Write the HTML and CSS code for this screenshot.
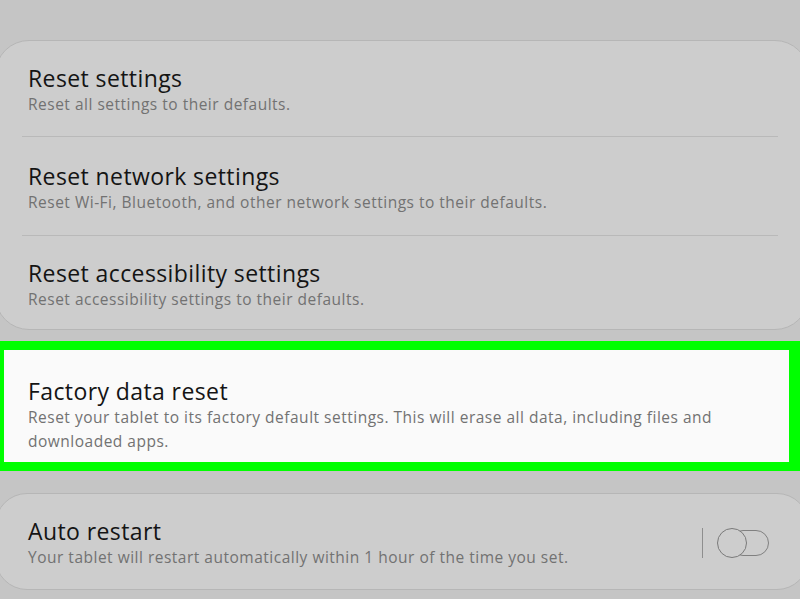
FILE: index.html
```html
<!DOCTYPE html>
<html lang="en">
<head>
    <meta charset="UTF-8">
    <title>Reset</title>
    <link rel="stylesheet" href="styles.css">
</head>
<body>
    <div class="screen">
        <!-- Reset options group -->
        <div class="card card-top">
            <div class="row">
                <div class="title">Reset settings</div>
                <div class="summary">Reset all settings to their defaults.</div>
            </div>
            <div class="divider"></div>
            <div class="row row-mid">
                <div class="title">Reset network settings</div>
                <div class="summary">Reset Wi-Fi, Bluetooth, and other network settings to their defaults.</div>
            </div>
            <div class="divider"></div>
            <div class="row row-last">
                <div class="title">Reset accessibility settings</div>
                <div class="summary">Reset accessibility settings to their defaults.</div>
            </div>
        </div>

        <!-- Highlighted option -->
        <div class="highlight">
            <div class="title">Factory data reset</div>
            <div class="summary">Reset your tablet to its factory default settings. This will erase all data, including files and downloaded apps.</div>
        </div>

        <div class="card card-bottom">
            <div class="row row-switch">
                <div class="row-text">
                    <div class="title">Auto restart</div>
                    <div class="summary">Your tablet will restart automatically within 1 hour of the time you set.</div>
                </div>
                <div class="switch-area">
                    <span class="switch-sep"></span>
                    <span class="switch">
                        <span class="switch-thumb"></span>
                    </span>
                </div>
            </div>
        </div>
    </div>
</body>
</html>
```

FILE: styles.css
```css
body {
    margin: 0;
    background-color: #c5c5c5;
    font-family: 'Open Sans', 'Noto Sans', sans-serif;
    overflow: hidden;
}

.screen {
    width: 800px;
    height: 599px;
    padding-top: 40px;
    box-sizing: border-box;
    overflow: hidden;
}

.card {
    background-color: #cdcdcd;
    border: 1px solid #b6b6b6;
    border-radius: 34px;
    margin-left: -5px;
    margin-right: -9px;
    padding-left: 32px;
}

.row {
    padding: 23px 0 20px;
}

.row-mid {
    padding-top: 25px;
    padding-bottom: 21px;
}

.row-last {
    padding-bottom: 18px;
}

.divider {
    height: 1px;
    background-color: #b9b9b9;
    margin-left: -6px;
    margin-right: 30px;
}

.title {
    font-size: 23px;
    line-height: 28px;
    letter-spacing: 0.4px;
    color: #141414;
}

.summary {
    font-size: 15.5px;
    line-height: 24px;
    letter-spacing: 0.5px;
    color: #727272;
}

/* Green highlight box */
.highlight {
    margin-top: 11px;
    background-color: #fafafa;
    border-style: solid;
    border-color: #00ff00;
    border-width: 9px 11px 9px 4px;
    padding: 27px 40px 9px 24px;
}

.card-bottom {
    margin-top: 22px;
    border-radius: 32px;
}

.row-switch {
    display: flex;
    align-items: center;
    padding: 23px 0 20px;
}

.row-text {
    flex: 1;
}

.switch-area {
    display: flex;
    align-items: center;
    padding-right: 39px;
}

.switch-sep {
    width: 1px;
    height: 30px;
    background-color: #8e8e8e;
    margin-right: 14px;
}

.switch {
    position: relative;
    width: 52px;
    height: 30px;
}

.switch::before {
    content: "";
    position: absolute;
    left: 13px;
    right: 0;
    top: 2px;
    bottom: 2px;
    border: 1.5px solid #808080;
    border-radius: 14px;
    box-sizing: border-box;
}

.switch-thumb {
    position: absolute;
    left: 0;
    top: 0;
    width: 30px;
    height: 30px;
    border: 1.5px solid #7a7a7a;
    border-radius: 50%;
    box-sizing: border-box;
    background-color: #cdcdcd;
}
```
